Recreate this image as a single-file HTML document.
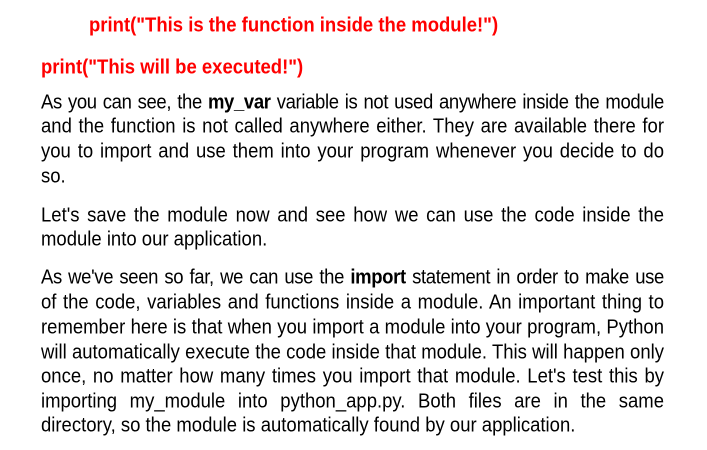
<!DOCTYPE html>
<html><head><style>
html,body{margin:0;padding:0;background:#fff;width:707px;height:450px;overflow:hidden}
body{font-family:"Liberation Sans",Arial,sans-serif;font-size:18.5px;color:#000;position:relative}
.l{position:absolute;left:41px;width:623px;white-space:nowrap;line-height:20px;transform:scaleY(1.08);transform-origin:0 50%}
.j{text-align:justify;text-align-last:justify;white-space:normal}
.t{letter-spacing:-0.35px}
.r{color:#f00;font-weight:bold}
</style></head><body>
<div class="l r" style="left:89px;top:15px">print("This is the function inside the module!")</div>
<div class="l r" style="top:57px">print("This will be executed!")</div>
<div class="l j t" style="top:92px">As you can see, the <b>my_var</b> variable is not used anywhere inside the module</div>
<div class="l j" style="top:116px">and the function is not called anywhere either. They are available there for</div>
<div class="l j" style="top:141px">you to import and use them into your program whenever you decide to do</div>
<div class="l" style="top:166px">so.</div>
<div class="l j" style="top:205px">Let's save the module now and see how we can use the code inside the</div>
<div class="l" style="top:229px">module into our application.</div>
<div class="l j t" style="top:267px">As we've seen so far, we can use the <b>import</b> statement in order to make use</div>
<div class="l j" style="top:292px">of the code, variables and functions inside a module. An important thing to</div>
<div class="l j" style="top:317px">remember here is that when you import a module into your program, Python</div>
<div class="l j" style="top:342px">will automatically execute the code inside that module. This will happen only</div>
<div class="l j" style="top:366px">once, no matter how many times you import that module. Let's test this by</div>
<div class="l j" style="top:391px">importing my_module into python_app.py. Both files are in the same</div>
<div class="l" style="top:415px">directory, so the module is automatically found by our application.</div>
</body></html>
